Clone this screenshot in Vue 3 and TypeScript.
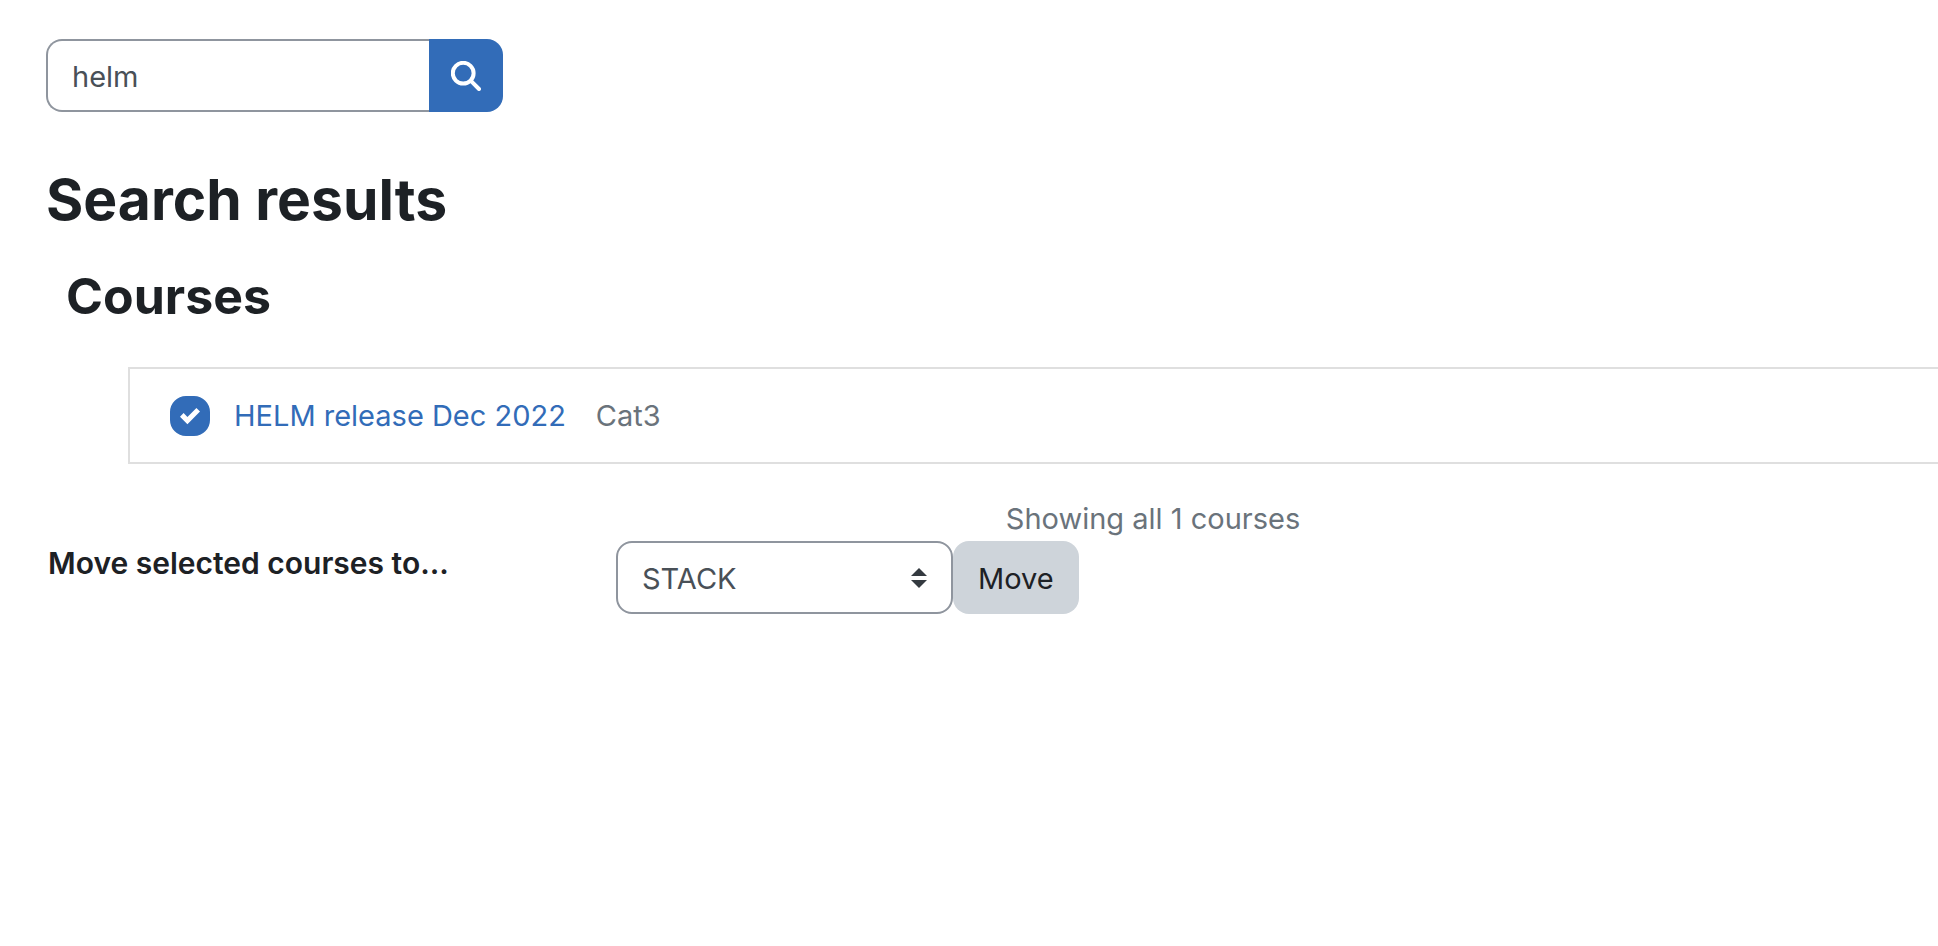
<script setup lang="ts">
import { ref } from 'vue'

interface Course {
  id: number
  name: string
  category: string
}

const query = ref('helm')
const courses: Course[] = [{ id: 1, name: 'HELM release Dec 2022', category: 'Cat3' }]
const selected = ref<number[]>([1])
const categories = ['STACK', 'Cat3']
const target = ref('STACK')
</script>

<template>
  <main class="page">
    <form class="search" role="search" @submit.prevent>
      <input v-model="query" class="search-input" type="text" aria-label="Search courses" />
      <button class="search-button" type="submit" aria-label="Search">
        <svg class="search-icon" viewBox="0 0 30 30" aria-hidden="true">
          <circle cx="12.2" cy="12.2" r="10.4" />
          <path d="M19.9 19.9L28 28" />
        </svg>
      </button>
    </form>

    <h2 class="title">Search results</h2>

    <section class="results">
      <h3 class="subtitle">Courses</h3>
      <ul class="course-list">
        <li v-for="course in courses" :key="course.id" class="course">
          <input
            :id="`course-${course.id}`"
            v-model="selected"
            class="tick"
            type="checkbox"
            :value="course.id"
            :aria-label="`Select ${course.name}`"
          />
          <a class="course-link" href="#">{{ course.name }}</a>
          <span class="category">{{ course.category }}</span>
        </li>
      </ul>
      <p class="summary">Showing all {{ courses.length }} courses</p>
    </section>

    <form class="move" @submit.prevent>
      <label class="move-label" for="move-target">Move selected courses to...</label>
      <select id="move-target" v-model="target" class="move-select">
        <option v-for="name in categories" :key="name">{{ name }}</option>
      </select>
      <button class="move-button" type="submit">Move</button>
    </form>
  </main>
</template>

<style>
body {
  margin: 0;
  background: #fff;
}
</style>

<style scoped>
.page {
  box-sizing: border-box;
  min-height: 100vh;
  padding: 39px 0 39px 46px;
  overflow-x: clip;
  color: #1d2125;
  font-family: Inter, "Liberation Sans", sans-serif;
  font-size: 29px;
  line-height: 45px;
}

input,
select,
button {
  box-sizing: border-box;
  margin: 0;
  font: inherit;
}

.search {
  display: flex;
  height: 73px;
}

.search-input {
  width: 383px;
  padding: 2px 24px 0;
  border: 2px solid #8f959e;
  border-right: 0;
  border-radius: 16px 0 0 16px;
  background: #fff;
  color: #495057;
}

.search-button {
  display: grid;
  place-items: center;
  width: 74px;
  padding: 0;
  border: 0;
  border-radius: 0 16px 16px 0;
  background: #326cb8;
}

.search-icon {
  width: 30px;
  height: 30px;
  fill: none;
  stroke: #fff;
  stroke-width: 4;
  stroke-linecap: round;
}

.title,
.subtitle {
  margin: 0;
  font-weight: 700;
}

.title {
  margin-top: 52px;
  font-size: 57px;
  line-height: 72px;
}

/* The results pane is wider than the window and runs past its right edge. */
.results {
  margin: 28px -240px 0 20px;
}

.subtitle {
  font-size: 50px;
  line-height: 64px;
}

.course-list {
  margin: 39px 0 0 62px;
  padding: 0;
  list-style: none;
}

.course {
  display: flex;
  align-items: center;
  padding: 24px 40px;
  border: 2px solid #dfdfdf;
}

.tick {
  display: grid;
  place-items: center;
  flex: none;
  width: 40px;
  height: 40px;
  border: 2px solid #8f959e;
  border-radius: 16px;
  appearance: none;
  background: #fff;
}

.tick:checked {
  border-color: #326cb8;
  background: #326cb8 url("data:image/svg+xml,%3Csvg xmlns='http://www.w3.org/2000/svg' viewBox='0 0 8 8'%3E%3Cpath fill='%23fff' d='M6.564.75l-3.59 3.612-1.538-1.55L0 4.26l2.974 2.99L8 2.193z'/%3E%3C/svg%3E") center / 20px 20px no-repeat;
}

.course-link {
  margin-left: 24px;
  color: #326cb8;
  text-decoration: none;
}

.category {
  margin-left: 30px;
  color: #6a737b;
}

.summary {
  margin: 32px 0 0 62px;
  color: #6a737b;
  text-align: center;
}

.move {
  display: flex;
  align-items: flex-start;
}

.move-label {
  box-sizing: border-box;
  flex: 0 1 570px;
  padding-left: 2px;
  font-size: 30px;
  font-weight: 600;
}

.move-select {
  width: 337px;
  height: 73px;
  padding: 2px 50px 0 24px;
  border: 2px solid #8f959e;
  border-radius: 16px;
  appearance: none;
  background: #fff url("data:image/svg+xml,%3Csvg xmlns='http://www.w3.org/2000/svg' viewBox='0 0 4 5'%3E%3Cpath fill='%23343a40' d='M2 0L0 2h4zm0 5L0 3h4z'/%3E%3C/svg%3E") right 24px center / 16px 20px no-repeat;
  color: #495057;
}

.move-button {
  height: 73px;
  padding: 2px 25px 0;
  border: 0;
  border-radius: 16px;
  background: #ced4da;
  color: #1d2125;
}
</style>
